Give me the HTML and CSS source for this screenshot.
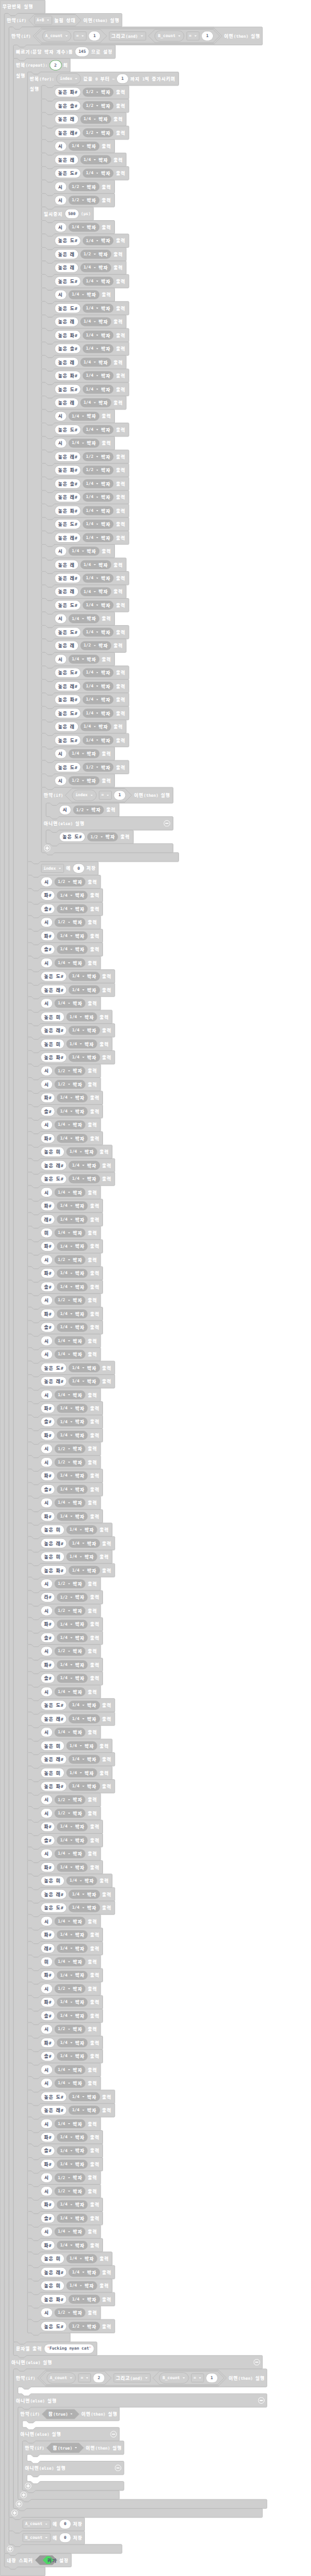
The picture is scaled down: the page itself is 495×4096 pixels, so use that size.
FILE: index.html
```html
<!DOCTYPE html>
<html lang="ko">
<head>
<meta charset="utf-8">
<title>무한반복 실행</title>
<link rel="stylesheet" href="styles.css">
</head>
<body>
<main class="workspace"><div class="canvas" id="canvas"></div></main>
<script src="blocks.js"></script>
</body>
</html>
```

FILE: styles.css
```css
body {
  margin: 0;
  background: #fff;
}

.workspace {
  width: 495px;
  height: 4096px;
  overflow: hidden;
}

.canvas {
  width: 553px;
  height: 4580px;
  transform: scale(0.8943);
  transform-origin: 0 0;
  font: bold 7.3px/10px "DejaVu Sans Mono", "Noto Sans CJK KR", monospace;
  color: #fff;
  white-space: pre;
}

.ko {
  font-family: "Noto Sans CJK KR", sans-serif;
  font-size: 8px;
  font-weight: 900;
  letter-spacing: 1.04px;
}

.block,
.hex {
  position: relative;
}

.shape {
  position: absolute;
  left: 0;
  top: 0;
  width: 1px;
  height: 1px;
  overflow: visible;
}

.shape path {
  fill: #cfcfcf;
  stroke: #bababa;
  stroke-width: 1;
}

.row {
  position: relative;
  display: flex;
  align-items: center;
  gap: 4.1px;
  box-sizing: border-box;
  padding: 0 4.4px;
}

.row.indent {
  padding-left: 24.3px;
}

.row .minus {
  margin-left: auto;
}

.slot {
  display: flex;
}

.arm {
  position: relative;
  flex: none;
  box-sizing: border-box;
  padding: 1px 0 0 4.4px;
}

.stack {
  flex: 1;
  min-width: 0;
}

.value {
  display: flex;
  align-items: center;
  justify-content: center;
  flex: none;
  box-sizing: border-box;
}

.field {
  min-width: 19.7px;
  height: 16.6px;
  padding: 0 5.5px;
  border-radius: 8.3px;
  background: #fff;
  box-shadow: 0 0 0 0.7px #c0c0c0;
  color: #575e75;
}

.field.active {
  box-shadow: 0 0 0 0.9px #6fb56f;
}

.beat {
  height: 16.6px;
  padding: 0 5.6px 0 6px;
  gap: 4.6px;
  border-radius: 8.3px;
  background: #b0b0b0;
}

.variable {
  height: 20px;
  padding: 0 5.6px 0 5px;
  gap: 4.8px;
  border: 1px solid #bababa;
  border-radius: 10px;
}

.menu {
  height: 16.6px;
  padding: 0 3.9px 0 3.3px;
  gap: 4.8px;
  border: 1px solid #bababa;
  border-radius: 2px;
}

.caret {
  flex: none;
  width: 4.6px;
  height: 2.6px;
  background: currentColor;
  clip-path: polygon(0 0, 100% 0, 50% 100%);
}

.quote {
  color: #e8a0a0;
  width: 3.6px;
  overflow: hidden;
}

.hex {
  display: flex;
  align-items: center;
  flex: none;
  box-sizing: border-box;
  gap: 4px;
}

.hex > :not(.shape) {
  position: relative;
}

.shape .band {
  fill: #c4c4c4;
}

.hex-state {
  height: 20px;
  padding: 0 9.6px 0 10px;
}

.hex-compare {
  height: 24px;
  padding: 0 12px 0 11.6px;
}

.hex-and {
  height: 28px;
  padding: 0 4.1px;
}

.hex-bool {
  height: 16.6px;
  padding: 0 11.2px;
}

.hex-bool > .shape path {
  fill: #b0b0b0;
  stroke: #b0b0b0;
}

.hex-toggle {
  height: 16px;
  width: 38.4px;
  padding-left: 13px;
  color: #575e75;
}

.hex-toggle > .shape path {
  fill: #9b9b9b;
  stroke: #9b9b9b;
}

.knob {
  width: 19.5px;
  height: 14px;
  padding-left: 8.6px;
}

.hex-toggle > .knob > .shape path {
  fill: #4cd964;
  stroke: none;
}

.fold {
  flex: none;
  width: 12px;
  height: 12px;
  fill: none;
  stroke: #fff;
}
```

FILE: blocks.js
```javascript
const el = (cls, ...kids) => {
  const node = document.createElement('div');
  node.className = cls;
  node.append(...kids);
  return node;
};

// Hangul syllables get their own span so both scripts keep an even pitch.
const label = (text) => {
  const node = document.createElement('span');
  node.innerHTML = text.replace(/[가-힣]+/g, '<span class="ko">$&</span>');
  return node;
};

const svg = (cls, markup, box) => {
  const holder = document.createElement('template');
  holder.innerHTML = `<svg class="${cls}"${box ? ` viewBox="${box}"` : ''}>${markup}</svg>`;
  return holder.content.firstChild;
};

const caret = () => el('caret');
const field = (text, extra = '') => el('value field' + extra, label(text));
const variable = (name) => el('value variable', label(name), caret());
const menu = (name) => el('value menu', label(name), caret());
const minus = () => svg('fold minus', '<circle cx="6" cy="6" r="5.3"/><path d="M3.2 6h5.6" stroke-width="1.7"/>', '0 0 12 12');
const plus = () => svg('fold', '<circle cx="6" cy="6" r="5.3"/><path d="M3 6h6M6 3v6" stroke-width="2"/>', '0 0 12 12');

const hex = (kind, height, ...kids) => {
  const node = el('hex hex-' + kind, ...kids);
  node.dataset.height = height;
  return node;
};
const compare = (name, n) => hex('compare', 24, variable(name), menu('='), field(n));
const bothCounts = (a, b) =>
  hex('and', 28, compare('A_count', a), menu('그리고(and)'), compare('B_count', b));
const truth = () => hex('bool', 16.6, label('참(true)'), caret());

// Outline pieces: the connector dips 4px and spans 18px.
const NOTCH = 'c1,0 1.5,.5 2,1 l2,2 c.5,.5 1,1 2,1 h6 c1,0 1.5,-.5 2,-1 l2,-2 c.5,-.5 1,-1 2,-1 ';
const NOTCH_BACK = 'c-1,0 -1.5,.5 -2,1 l-2,2 c-.5,.5 -1,1 -2,1 h-6 c-1,0 -1.5,-.5 -2,-1 l-2,-2 c-.5,-.5 -1,-1 -2,-1 ';

const outline = (width, parts, hat) => {
  let d = hat ? 'M0,2 a2,2 0 0 1 2,-2 ' : 'M0,2 a2,2 0 0 1 2,-2 H6 ' + NOTCH;
  let y = 0;
  for (const part of parts) {
    if (part.slot) {
      const x = part.arm;
      d += `H${x + 24} ${NOTCH_BACK} H${x + 2} a2,2 0 0 0 -2,2 V${y + part.height - 2} a2,2 0 0 0 2,2 H${x + 6} ${NOTCH}`;
    } else {
      d += `H${width - 1.5} a1.5,1.5 0 0 1 1.5,1.5 V${y + part.height - 1.5} a1.5,1.5 0 0 1 -1.5,1.5 `;
    }
    y += part.height;
  }
  if (!hat) d += 'H24 ' + NOTCH_BACK;
  return d + 'H2 a2,2 0 0 1 -2,-2 Z';
};

const row = (height, items, indent) => ({ height, items, indent });
const slot = (blocks, arm = 8, side = '') => ({
  slot: true, blocks, arm, side,
  height: blocks.reduce((sum, b) => sum + b.height, 0) || 12,
});

const block = (width, parts, hat = false) => {
  const node = el('block', svg('shape', `<path d="${outline(width, parts, hat)}"/>`));
  node.style.width = width + 'px';
  for (const part of parts) {
    let child;
    if (part.slot) {
      const arm = el('arm');
      if (part.side) arm.append(label(part.side));
      arm.style.width = part.arm + 'px';
      child = el('slot', arm, el('stack', ...part.blocks.map((b) => b.node)));
    } else {
      child = el(part.indent ? 'row indent' : 'row', ...part.items);
    }
    child.style.height = part.height + 'px';
    node.append(child);
  }
  return { node, height: parts.reduce((sum, p) => sum + p.height, 0) };
};

const note = (pitch, beat) => {
  const high = pitch.startsWith('^');
  const name = pitch.replace('^', '높은 ');
  const sharp = name.endsWith('#');
  const width = high ? (sharp ? 155.3 : 150.6) : (sharp ? 133.8 : 130);
  return block(width, [row(24, [
    field(name),
    el('value beat', label(beat), caret(), label('박자')),
    label('출력'),
  ], true)]);
};

// "^" raises the octave, a trailing "2" marks a half beat; the rest are quarters.
const melody = (text) => text.trim().split(/\s+/).map((token) =>
  token.endsWith('2') ? note(token.slice(0, -1), '1/2') : note(token, '1/4'));

const assign = (name, width) =>
  block(width, [row(24, [menu(name), label('에'), field('0'), label('저장')], true)]);
const ifRow = (height, condition) =>
  row(height, [label('만약(if)'), condition, label('이면(then) 실행')]);
const elseRow = () => row(24, [label('아니면(else) 실행'), minus()]);
const foot = (...items) => row(16, items);

const chorusA = `^파#2 ^솔#2 ^레 ^레#2 시 ^레 ^도# 시2 시2`;
const chorusB = `시 ^도# ^레2 ^레 ^도# 시 ^도# ^레 ^파# ^솔# ^레 ^파# ^도# ^레 시 ^도# 시 ^레#2
  ^파#2 ^솔# ^레# ^파# ^도# ^레# 시 ^레 ^레# ^레 ^도# 시 ^도# ^레2 시 ^도# ^레# ^파# ^도# ^레
  ^도# 시 ^도#2 시2`;
const verse = `시2 파# 솔# 시2
  파# 솔# 시 ^도# ^레# 시 ^미 ^레# ^미 ^파# 시2 시2 파# 솔# 시 파# ^미 ^레# ^도# 시 파# 레# 미
  파# 시2 파# 솔# 시2 파# 솔# 시 시 ^도# ^레# 시 파# 솔# 파# 시2 시2 파# 솔# 시 파# ^미 ^레# ^미
  ^파# 시2 라#2 시2 파# 솔# 시2
  파# 솔# 시 ^도# ^레# 시 ^미 ^레# ^미 ^파# 시2 시2 파# 솔# 시 파# ^미 ^레# ^도# 시 파# 레# 미
  파# 시2 파# 솔# 시2 파# 솔# 시 시 ^도# ^레# 시 파# 솔# 파# 시2 시2 파# 솔# 시 파# ^미 ^레# ^미
  ^파# 시2 ^도#2`;

const pause = block(92.3, [row(24, [label('일시중지'), field('500'), label('(µs)')])]);

const lastTurn = block(234, [
  ifRow(28, compare('index', '1')),
  slot(melody('시2')),
  elseRow(),
  slot(melody('^도#2')),
  foot(plus()),
]);

const forLoop = block(269, [
  row(24, [label('반복(for):'), variable('index'), label('값을 0 부터 ~'), field('1'),
    label('까지 1씩 증가시키며')]),
  slot([...melody(chorusA), pause, ...melody(chorusB), lastTurn], 24.8, '실행'),
  foot(),
]);

const repeat = block(101, [
  row(24, [label('반복(repeat):'), field('2', ' active'), label('회')]),
  slot([forLoop, assign('index', 125.8), ...melody(verse)], 24.8, '실행'),
  foot(),
]);

const quote = () => {
  const mark = label('"');
  mark.className = 'quote';
  return mark;
};
const showString = block(148.5, [row(24, [
  label('문자열 출력'),
  el('value field', quote(), label('Fucking nyan cat'), quote()),
])]);

const tempo = block(181.2, [row(24, [
  label('빠르기(분당 박자 개수)를'), field('145'), label('으로 설정'),
])]);

const emptyIf = (width, inner) => block(width, [
  ifRow(24, truth()), slot([]), elseRow(), slot(inner), foot(plus()),
]);

const secondCheck = block(451, [
  ifRow(32, bothCounts('2', '1')),
  slot([]),
  elseRow(),
  slot([emptyIf(180.4, [emptyIf(180.4, [])])]),
  foot(plus()),
]);

const firstCheck = block(451, [
  ifRow(32, bothCounts('1', '1')),
  slot([tempo, repeat, showString]),
  elseRow(),
  slot([secondCheck]),
  foot(plus()),
]);

const pressed = block(209, [
  ifRow(24, hex('state', 20, menu('A+B'), label('눌림 상태'))),
  slot([firstCheck, assign('A_count', 134.5), assign('B_count', 134.5)]),
  foot(plus()),
]);

const knob = el('hex knob', label('켜기'));
knob.dataset.height = 14;
const speaker = block(119, [row(24, [
  label('내장 스피커'), hex('toggle', 16, knob), label('설정'),
])]);

const forever = block(80.3, [
  row(24, [label('무한반복 실행')]),
  slot([pressed, speaker]),
  foot(),
], true);

document.getElementById('canvas').append(forever.node);

// Hexagons follow the laid-out width of their contents.
for (const node of document.querySelectorAll('.hex')) {
  const h = Number(node.dataset.height);
  const w = parseFloat(getComputedStyle(node).width);
  const r = h / 2;
  const band = (y, height) => `<rect class="band" x="${r}" y="${y}" width="${w - h}" height="${height}"/>`;
  const bands = h === 28 ? band(-2, 4) + band(26, 4) : h >= 20 ? band(-2, 2) + band(h, 2) : '';
  node.prepend(svg('shape', `${bands}<path d="M0,${r} L${r},0 H${w - r} L${w},${r} L${w - r},${h} H${r} Z"/>${h === 28 ? bands : ''}`));
}
```
